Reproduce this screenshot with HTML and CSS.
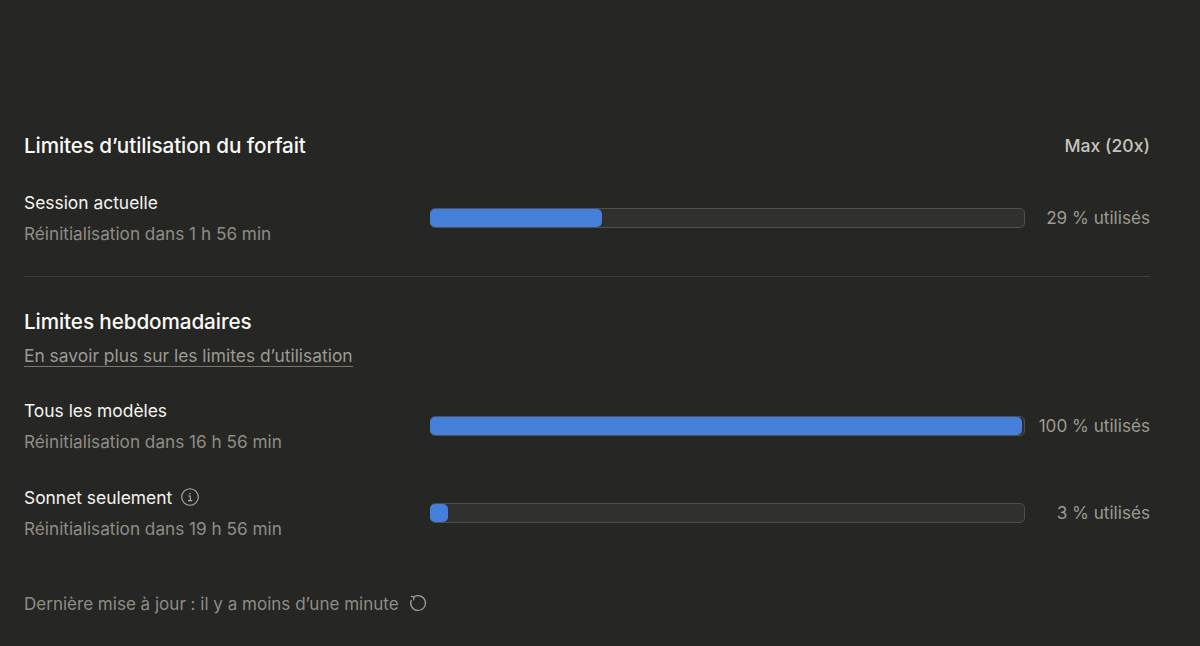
FILE: index.html
```html
<!DOCTYPE html>
<html lang="fr">
<head>
<meta charset="utf-8">
<title>Limites d’utilisation</title>
<link rel="stylesheet" href="styles.css">
</head>
<body>
<main class="page">
  <section class="plan">
    <header class="section-head">
      <h2 class="title">Limites d’utilisation du forfait</h2>
      <span class="plan-name">Max (20x)</span>
    </header>
    <div class="row">
      <div class="info">
        <div class="label">Session actuelle</div>
        <div class="sub">Réinitialisation dans 1 h 56 min</div>
      </div>
      <div class="track"><div class="fill" style="width:29%"></div></div>
      <div class="pct">29 % utilisés</div>
    </div>
  </section>
  <hr class="divider">
  <section class="weekly">
    <h2 class="title">Limites hebdomadaires</h2>
    <a class="learn" href="#">En savoir plus sur les limites d’utilisation</a>
    <div class="row row-first">
      <div class="info">
        <div class="label">Tous les modèles</div>
        <div class="sub">Réinitialisation dans 16 h 56 min</div>
      </div>
      <div class="track"><div class="fill" style="width:100%"></div></div>
      <div class="pct">100 % utilisés</div>
    </div>
    <div class="row row-next">
      <div class="info">
        <div class="label">Sonnet seulement
          <svg class="info-icon" viewBox="0 0 18 18" width="18" height="18" fill="none" stroke="currentColor" aria-hidden="true">
            <circle cx="9" cy="9" r="8.3" stroke-width="1.1"/>
            <path d="M7.4 8h1.8v4.4M7 12.6h4.2" stroke-width="1.1"/>
            <circle cx="8.9" cy="5.6" r=".8" fill="currentColor" stroke="none"/>
          </svg>
        </div>
        <div class="sub">Réinitialisation dans 19 h 56 min</div>
      </div>
      <div class="track"><div class="fill" style="width:3%"></div></div>
      <div class="pct">3 % utilisés</div>
    </div>
  </section>
  <footer class="updated">
    <span>Dernière mise à jour : il y a moins d’une minute</span>
    <svg class="refresh" viewBox="0 0 18 18" width="18" height="18" fill="none" stroke="currentColor" stroke-width="1.2" aria-hidden="true">
      <path d="M5 2.9A7.4 7.4 0 1 1 2.3 6.1"/>
      <path d="M1.9 2.2 5.2 3l-.8 3.4"/>
    </svg>
  </footer>
</main>
</body>
</html>
```

FILE: styles.css
```css
* { box-sizing: border-box; }
html, body { margin: 0; height: 100%; }
body {
  background: #262624;
  color: #f5f4ef;
  font-family: Inter, "Liberation Sans", sans-serif;
  overflow: hidden;
}
.page { padding: 132px 50px 0 24px; }
.section-head { display: flex; justify-content: space-between; align-items: center; height: 27px; }
.title { margin: 0; font-size: 20.7px; line-height: 27px; font-weight: 550; letter-spacing: -0.1px; color: #faf9f5; }
.plan-name { font-size: 17.6px; font-weight: 500; color: #c5c3ba; }
.row { display: flex; align-items: center; height: 64px; }
.plan .row { margin-top: 27px; }
.info { width: 406px; flex: none; }
.label { display: flex; align-items: center; gap: 9px; height: 32px; font-size: 17.4px; color: #f5f4ef; }
.sub { height: 32px; line-height: 32px; font-size: 17.2px; color: #8f8d85; }
.track {
  width: 595px; flex: none; height: 20px;
  background: #30302e;
  border: 1px solid #4f4f4b;
  border-radius: 5px;
}
.fill { height: 100%; max-width: 592px; margin-left: -1px; background: #447fda; border-radius: 5px; }
.pct { flex: 1; padding-bottom: 2px; text-align: right; font-size: 17.15px; color: #9c9a92; }
.divider { margin: 26px 0 0; border: 0; border-top: 1px solid #3e3e3b; }
.weekly { padding-top: 31px; }
.learn {
  display: inline-block; margin-top: 10px;
  font-size: 17.4px; line-height: 21px; color: #9c9a92;
  text-decoration: none; border-bottom: 1px solid #77756e;
}
.row-first { margin-top: 27px; }
.row-next { margin-top: 23px; }
.info-icon { color: #b0aea6; }
.updated { display: flex; align-items: center; gap: 10px; margin-top: 46px; height: 24px; font-size: 17.05px; color: #8f8d85; }
.refresh { color: #a3a199; }
```
